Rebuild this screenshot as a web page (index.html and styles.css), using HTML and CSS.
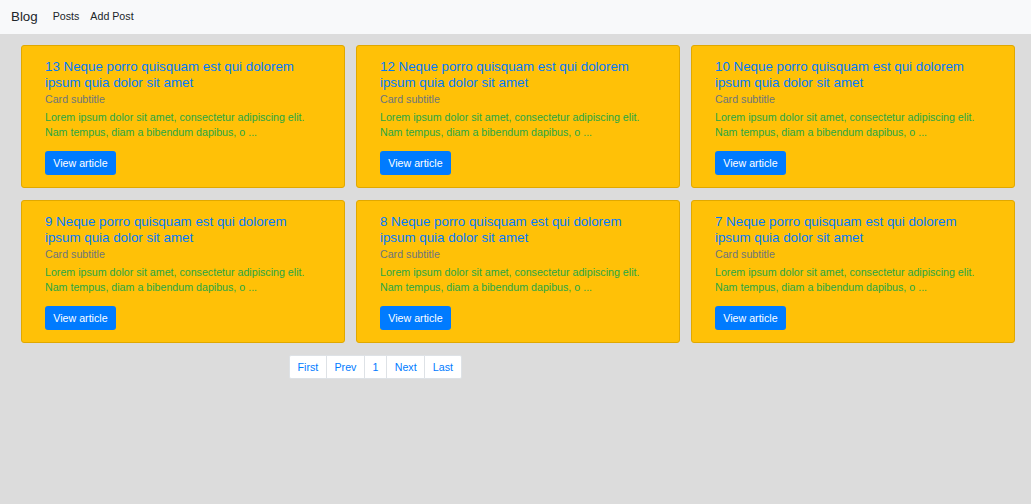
FILE: index.html
```html
<!DOCTYPE html>
<html>
<head>
<meta charset="utf-8">
<link rel="stylesheet" href="styles.css">
</head>
<body>
<nav class="navbar">
  <span class="brand">Blog</span>
  <a class="nav-link" href="#">Posts</a>
  <a class="nav-link" href="#">Add Post</a>
</nav>
<main class="content">
  <div class="grid">
    <div class="card"><h5 class="card-title">13 Neque porro quisquam est qui dolorem ipsum quia dolor sit amet</h5><h6 class="card-subtitle">Card subtitle</h6><p class="card-text">Lorem ipsum dolor sit amet, consectetur adipiscing elit. Nam tempus, diam a bibendum dapibus, o ...</p><a class="btn" href="#">View article</a></div>
    <div class="card"><h5 class="card-title">12 Neque porro quisquam est qui dolorem ipsum quia dolor sit amet</h5><h6 class="card-subtitle">Card subtitle</h6><p class="card-text">Lorem ipsum dolor sit amet, consectetur adipiscing elit. Nam tempus, diam a bibendum dapibus, o ...</p><a class="btn" href="#">View article</a></div>
    <div class="card"><h5 class="card-title">10 Neque porro quisquam est qui dolorem ipsum quia dolor sit amet</h5><h6 class="card-subtitle">Card subtitle</h6><p class="card-text">Lorem ipsum dolor sit amet, consectetur adipiscing elit. Nam tempus, diam a bibendum dapibus, o ...</p><a class="btn" href="#">View article</a></div>
    <div class="card"><h5 class="card-title">9 Neque porro quisquam est qui dolorem ipsum quia dolor sit amet</h5><h6 class="card-subtitle">Card subtitle</h6><p class="card-text">Lorem ipsum dolor sit amet, consectetur adipiscing elit. Nam tempus, diam a bibendum dapibus, o ...</p><a class="btn" href="#">View article</a></div>
    <div class="card"><h5 class="card-title">8 Neque porro quisquam est qui dolorem ipsum quia dolor sit amet</h5><h6 class="card-subtitle">Card subtitle</h6><p class="card-text">Lorem ipsum dolor sit amet, consectetur adipiscing elit. Nam tempus, diam a bibendum dapibus, o ...</p><a class="btn" href="#">View article</a></div>
    <div class="card"><h5 class="card-title">7 Neque porro quisquam est qui dolorem ipsum quia dolor sit amet</h5><h6 class="card-subtitle">Card subtitle</h6><p class="card-text">Lorem ipsum dolor sit amet, consectetur adipiscing elit. Nam tempus, diam a bibendum dapibus, o ...</p><a class="btn" href="#">View article</a></div>
  </div>
  <ul class="pagination">
    <li><a href="#">First</a></li>
    <li><a href="#">Prev</a></li>
    <li><a href="#">1</a></li>
    <li><a href="#">Next</a></li>
    <li><a href="#">Last</a></li>
  </ul>
</main>
</body>
</html>
```
FILE: styles.css
```css
* { box-sizing: border-box; }
html, body { margin: 0; padding: 0; }
body {
  background: #dcdcdc;
  font-family: "Liberation Sans", Arial, sans-serif;
  color: #212529;
  min-height: 504px;
}
.navbar {
  background: #f8f9fa;
  height: 34px;
  display: flex;
  align-items: center;
  padding: 0 11px 2px;
}
.brand {
  font-size: 13.33px;
  color: #212529;
  margin-right: 15px;
}
.nav-link {
  font-size: 10.67px;
  color: #212529;
  text-decoration: none;
  margin-right: 11px;
}
.content {
  padding: 11px 16px 0 21px;
}
.grid {
  display: grid;
  grid-template-columns: repeat(3, 1fr);
  column-gap: 11px;
  row-gap: 12px;
}
.card {
  background: #ffc107;
  border: 1px solid #e0a800;
  border-radius: 3px;
  padding: 13px 23px 12px;
  height: 143px;
}
.card-title {
  margin: 0 0 2px;
  font-size: 13.33px;
  font-weight: normal;
  line-height: 15.5px;
  color: #007bff;
}
.card-subtitle {
  margin: 0 0 4px;
  font-size: 10.67px;
  font-weight: normal;
  line-height: 14px;
  color: #6c757d;
}
.card-text {
  margin: 0 0 11px;
  font-size: 10.67px;
  line-height: 15px;
  color: #28a745;
}
.btn {
  display: inline-block;
  background: #007bff;
  color: #fff;
  font-size: 10.67px;
  line-height: 24px;
  height: 24px;
  padding: 0 8.3px;
  border-radius: 3px;
  text-decoration: none;
}
.pagination {
  display: flex;
  list-style: none;
  margin: 12px 0 0 268px;
  padding: 0;
}
.pagination li a {
  display: block;
  background: #fff;
  border: 1px solid #dee2e6;
  margin-left: -1px;
  font-size: 10.67px;
  line-height: 22px;
  padding: 0 7.6px;
  color: #007bff;
  text-decoration: none;
}
.pagination li:first-child a { margin-left: 0; border-radius: 2px 0 0 2px; }
.pagination li:last-child a { border-radius: 0 2px 2px 0; }
```
